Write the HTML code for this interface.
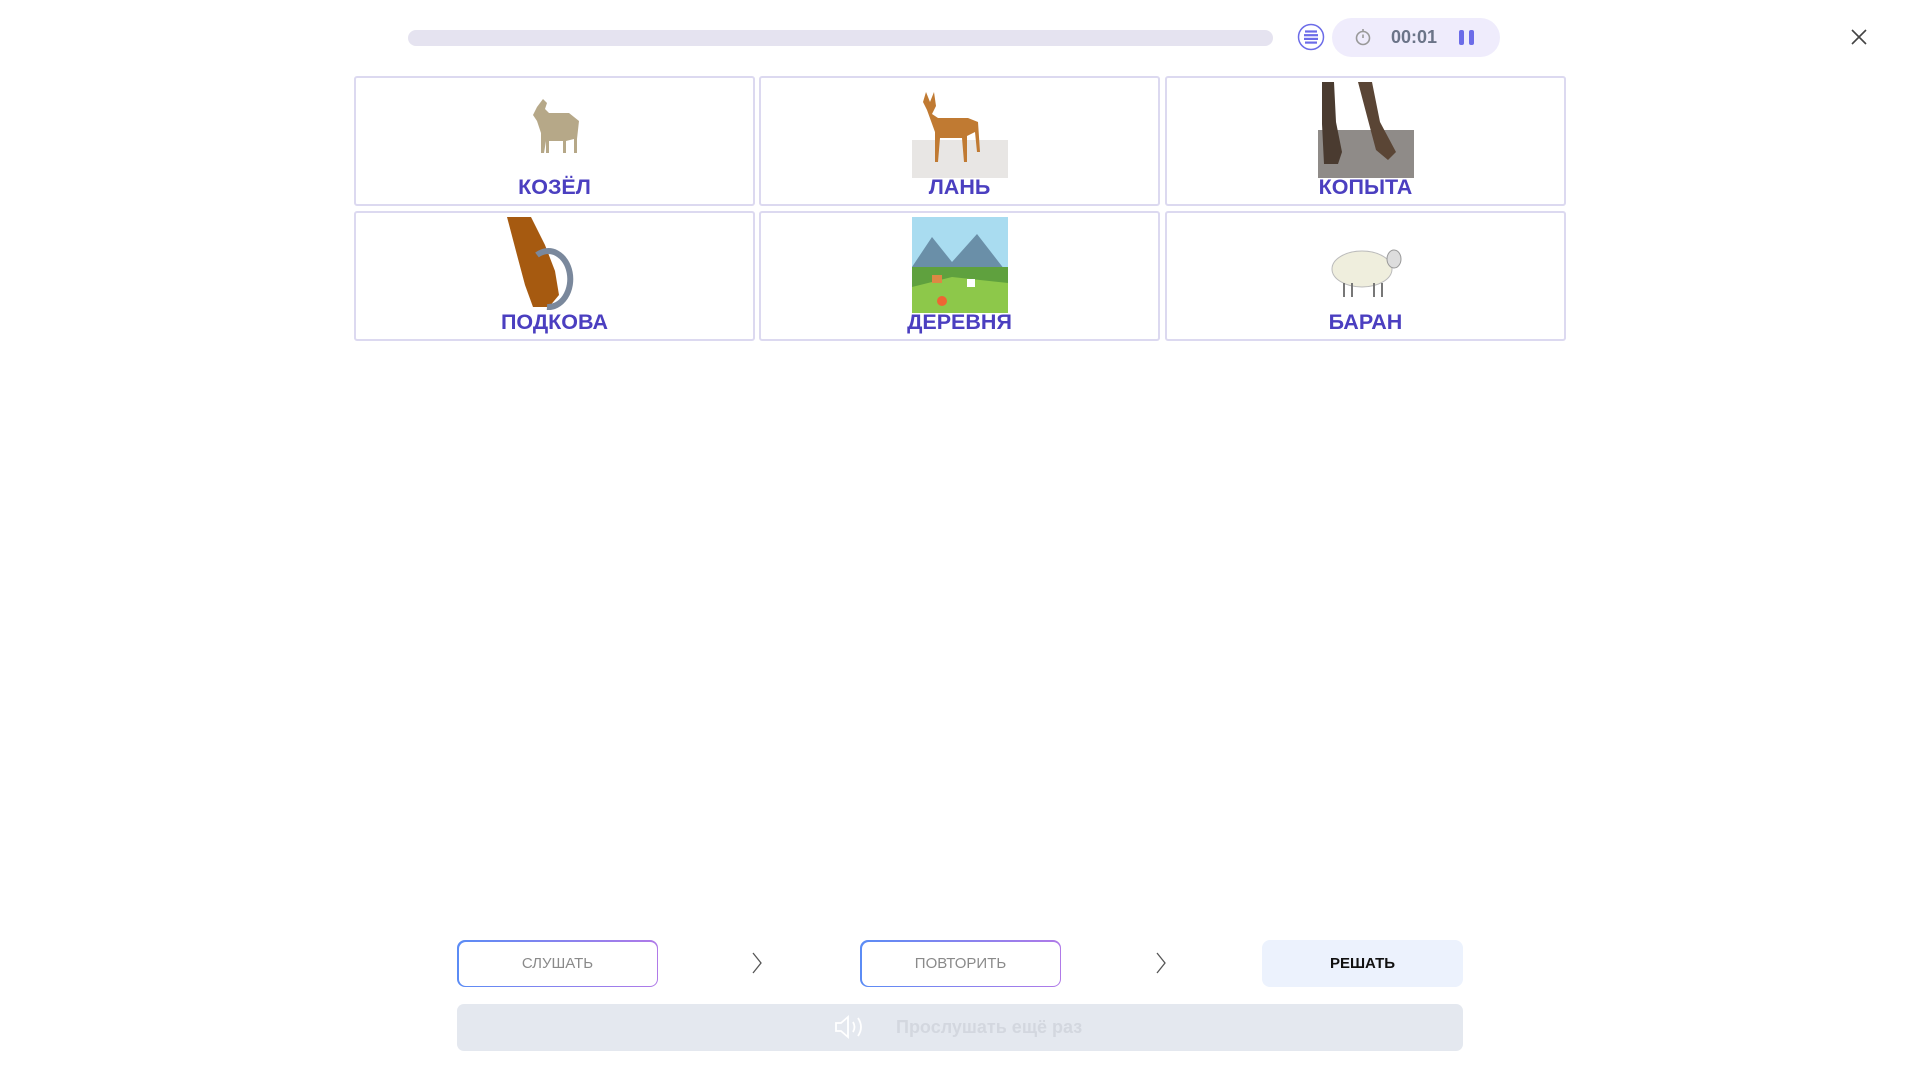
<!DOCTYPE html>
<html><head><meta charset="utf-8"><style>
*{margin:0;padding:0;box-sizing:border-box}
body{width:1920px;height:1080px;background:#fff;position:relative;overflow:hidden;font-family:"Liberation Sans",sans-serif}
.abs{position:absolute}
.card{position:absolute;width:401px;height:130px;border:2px solid #dcd9f0;border-radius:3px;background:#fff}
.card .lbl{position:absolute;left:0;right:0;top:97px;text-align:center;font-weight:bold;font-size:21.5px;color:#4b3fc0;letter-spacing:0px}
.card .img{position:absolute;left:50%;top:4px;width:96px;height:96px;margin-left:-48px}
.btn{position:absolute;top:940px;width:201px;height:47px;border-radius:8px;font-size:15px;display:flex;align-items:center;justify-content:center}
.gb{background:linear-gradient(90deg,#5b8cf5,#b07ae8);padding:1.5px}
.gb span{display:flex;width:100%;height:100%;background:#fff;border-radius:7px;align-items:center;justify-content:center;color:#8a8a8a}
</style></head><body>
<div class="abs" style="left:408px;top:30px;width:865px;height:16px;border-radius:8px;background:#e5e3f0"></div>
<svg class="abs" style="left:1297px;top:23px" width="28" height="28" viewBox="0 0 28 28"><circle cx="14" cy="14" r="12.5" fill="none" stroke="#6c6ce8" stroke-width="1.5"/><g stroke="#6c6ce8" stroke-width="2.2"><line x1="8" y1="8.5" x2="20" y2="8.5"/><line x1="7" y1="12.2" x2="21" y2="12.2"/><line x1="7" y1="15.9" x2="21" y2="15.9"/><line x1="8" y1="19.6" x2="20" y2="19.6"/></g></svg>
<div class="abs" style="left:1332px;top:18px;width:168px;height:39px;border-radius:20px;background:#efecfc"></div>
<svg class="abs" style="left:1354px;top:27px" width="18" height="20" viewBox="0 0 18 20"><circle cx="9" cy="11" r="6.5" fill="none" stroke="#999" stroke-width="1.6"/><line x1="9" y1="2" x2="9" y2="5" stroke="#999" stroke-width="1.6"/><line x1="9" y1="11" x2="9" y2="7.5" stroke="#999" stroke-width="1.6"/></svg>
<div class="abs" style="left:1391px;top:27px;font-size:18px;font-weight:bold;color:#6b7488">00:01</div>
<div class="abs" style="left:1459px;top:30px;width:5px;height:15px;border-radius:2px;background:#6c6ce8"></div>
<div class="abs" style="left:1469px;top:30px;width:5px;height:15px;border-radius:2px;background:#6c6ce8"></div>
<svg class="abs" style="left:1850px;top:28px" width="18" height="18" viewBox="0 0 18 18"><path d="M2 2L16 16M16 2L2 16" stroke="#444" stroke-width="1.6"/></svg>

<div class="card" style="left:354px;top:76px"><svg class="img" viewBox="0 0 96 96"><path d="M30 25l6-8 4 4-2 6 4 4 20 0 10 8-2 18 0 14h-3v-14l-8 2v12h-3v-12h-14v12h-3v-12l-2 12h-3l0-20-4-12-4-6z" fill="#b6a888"/></svg><div class="lbl">КОЗЁЛ</div></div>
<div class="card" style="left:759px;top:76px"><svg class="img" viewBox="0 0 96 96"><rect x="0" y="58" width="96" height="38" fill="#e8e6e4"/><path d="M14 10l4 10 4-10 2 14-4 8 6 4 30 0 10 4 2 30h-3l-2-20-8 4 0 26h-3l-2-24h-22l-2 24h-3l0-30-8-22-4-8z" fill="#c07a32"/></svg><div class="lbl">ЛАНЬ</div></div>
<div class="card" style="left:1165px;top:76px"><svg class="img" viewBox="0 0 96 96"><rect x="0" y="0" width="96" height="96" fill="#fff"/><rect x="0" y="48" width="96" height="48" fill="#8f8b88"/><path d="M4 0h12l2 40 6 30-4 12h-14l-2-40z" fill="#4a3b30"/><path d="M40 0h14l8 40 16 30-8 8-12-10-8-30z" fill="#5a4535"/></svg><div class="lbl">КОПЫТА</div></div>
<div class="card" style="left:354px;top:211px"><svg class="img" viewBox="0 0 96 96"><path d="M0 0h24l14 28 10 26 4 24-10 12-16 0-8-22-8-30z" fill="#a65a10"/><path d="M30 38a22 28 0 1 1 10 52" fill="none" stroke="#7a889c" stroke-width="6"/></svg><div class="lbl">ПОДКОВА</div></div>
<div class="card" style="left:759px;top:211px"><svg class="img" viewBox="0 0 96 96"><rect width="96" height="96" fill="#a9dcf0"/><path d="M0 50l20-30 20 25 25-28 31 40v39H0z" fill="#6a8fa8"/><rect y="50" width="96" height="46" fill="#5fa13e"/><path d="M0 70l40-10 56 6v30H0z" fill="#8dc84a"/><rect x="20" y="58" width="10" height="8" fill="#d84"/><rect x="55" y="62" width="8" height="8" fill="#fff"/><circle cx="30" cy="84" r="5" fill="#e63"/></svg><div class="lbl">ДЕРЕВНЯ</div></div>
<div class="card" style="left:1165px;top:211px"><svg class="img" viewBox="0 0 96 96"><ellipse cx="44" cy="52" rx="30" ry="18" fill="#efeedd" stroke="#bbb"/><ellipse cx="76" cy="42" rx="7" ry="9" fill="#ddd" stroke="#999"/><g stroke="#777" stroke-width="2"><line x1="26" y1="66" x2="26" y2="80"/><line x1="34" y1="66" x2="34" y2="80"/><line x1="56" y1="66" x2="56" y2="80"/><line x1="64" y1="66" x2="64" y2="80"/></g></svg><div class="lbl">БАРАН</div></div>

<div class="btn gb" style="left:457px"><span>СЛУШАТЬ</span></div>
<svg class="abs" style="left:751px;top:952px" width="12" height="22" viewBox="0 0 12 22"><path d="M2 1l8 10-8 10" fill="none" stroke="#555" stroke-width="1.3"/></svg>
<div class="btn gb" style="left:860px"><span>ПОВТОРИТЬ</span></div>
<svg class="abs" style="left:1155px;top:952px" width="12" height="22" viewBox="0 0 12 22"><path d="M2 1l8 10-8 10" fill="none" stroke="#555" stroke-width="1.3"/></svg>
<div class="btn" style="left:1262px;background:#ecf2fd;font-weight:bold;color:#111">РЕШАТЬ</div>
<div class="abs" style="left:457px;top:1004px;width:1006px;height:47px;border-radius:7px;background:#e4e8ef"></div>
<svg class="abs" style="left:834px;top:1014px" width="32" height="26" viewBox="0 0 32 26"><path d="M2 9h5l7-6v20l-7-6H2z" fill="none" stroke="#fff" stroke-width="1.8"/><path d="M19 8q3 5 0 10M24 4q6 9 0 18" fill="none" stroke="#fff" stroke-width="1.8"/></svg>
<div class="abs" style="left:896px;top:1017px;font-size:18px;font-weight:bold;color:#d3d7df">Прослушать ещё раз</div>
</body></html>
